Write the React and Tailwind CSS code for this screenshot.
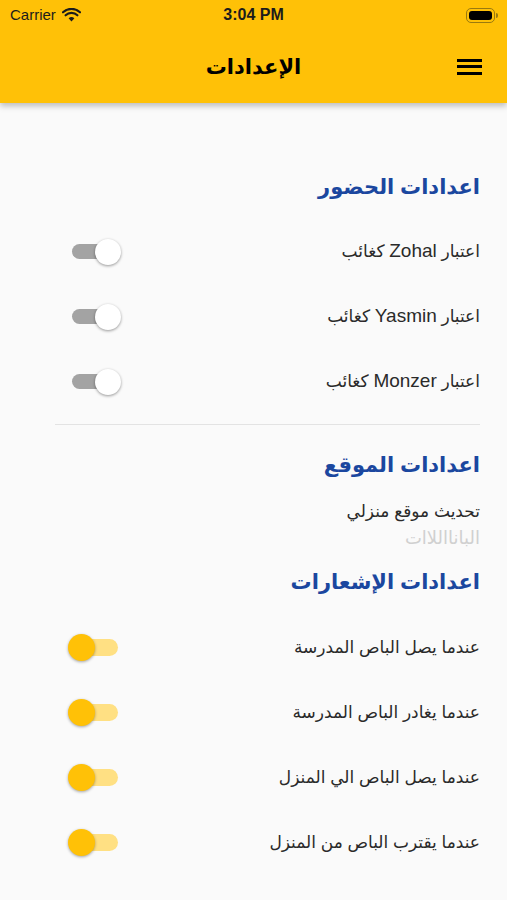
const font = { fontFamily: '"Liberation Sans", "DejaVu Sans", sans-serif' }

function Switch({ on }) {
  if (on) {
    return (
      <div className="relative w-[50px] h-[28px] flex items-center">
        <div className="absolute left-[10px] w-[40px] h-[17px] rounded-full bg-[#ffe083]" />
        <div className="absolute left-0 w-[27px] h-[27px] rounded-full bg-[#ffc107] shadow-[0_1px_3px_rgba(0,0,0,0.35)]" />
      </div>
    )
  }
  return (
    <div className="relative w-[50px] h-[28px] flex items-center">
      <div className="absolute left-0 w-[42px] h-[15px] rounded-full bg-[#a3a3a3]" />
      <div className="absolute left-[23px] w-[26px] h-[26px] rounded-full bg-white shadow-[0_1px_3px_rgba(0,0,0,0.4)]" />
    </div>
  )
}

function Row({ label, name, on }) {
  return (
    <div className="h-[65px] flex items-center justify-between">
      {name ? (
        <span className="text-[17px] text-[#2a2a2a]">
          اعتبار <span className="text-[19px]">{name}</span> كغائب
        </span>
      ) : (
        <span className="text-[17px] text-[#2a2a2a]">{label}</span>
      )}
      <div className={on ? 'ml-[41px]' : 'ml-[45px]'}>
        <Switch on={on} />
      </div>
    </div>
  )
}

function Heading({ children, className = '' }) {
  return (
    <div className={`flex items-center text-[21px] font-bold text-[#1b479f] ${className}`}>
      {children}
    </div>
  )
}

export default function App() {
  return (
    <div className="min-h-[900px] bg-[#fafafa]" style={font}>
      <div className="bg-[#ffc107] shadow-[0_3px_6px_rgba(0,0,0,0.25)] relative z-10">
        <div className="h-[30px] flex items-center justify-between px-[10px] text-[15px] text-[#1c1c1c] relative">
          <div className="flex items-center gap-[6px]">
            <span>Carrier</span>
            <svg width="19" height="14" viewBox="0 0 19 14">
              <path d="M9.5 13.5 L6.6 10.3 A4.2 4.2 0 0 1 12.4 10.3 Z" fill="#1c1c1c" />
              <path d="M3.6 7.3 A8.4 8.4 0 0 1 15.4 7.3" stroke="#1c1c1c" strokeWidth="2.2" fill="none" strokeLinecap="round" />
              <path d="M1 4.3 A12.3 12.3 0 0 1 18 4.3" stroke="#1c1c1c" strokeWidth="2.2" fill="none" strokeLinecap="round" />
            </svg>
          </div>
          <span className="absolute left-1/2 -translate-x-1/2 font-bold text-[16px]">3:04 PM</span>
          <div className="flex items-center mr-[-1px]">
            <div className="w-[29px] h-[15px] rounded-[5px] border border-[#9a7a10] p-[2px]">
              <div className="w-full h-full rounded-[3px] bg-black" />
            </div>
            <div className="w-[2px] h-[5px] rounded-r bg-[#9a7a10] ml-[1px]" />
          </div>
        </div>
        <div className="h-[73px] flex items-center justify-center relative">
          <span dir="rtl" className="text-[21px] font-bold text-black">الإعدادات</span>
          <div className="absolute right-[25px] flex flex-col gap-[3.5px]">
            <div className="w-[25px] h-[3px] bg-black" />
            <div className="w-[25px] h-[3px] bg-black" />
            <div className="w-[25px] h-[3px] bg-black" />
          </div>
        </div>
      </div>

      <div dir="rtl" className="pr-[27px] pl-[27px]">
        <div className="h-[51px]" />
        <Heading className="h-[65px]">اعدادات الحضور</Heading>
        <Row name="Zohal" />
        <Row name="Yasmin" />
        <Row name="Monzer" />

        <div className="mt-[10px] ml-[28px] h-px bg-[#e3e3e3]" />

        <Heading className="h-[40px] mt-[20px]">اعدادات الموقع</Heading>
        <div className="mt-[15px] h-[24px] flex items-center text-[17px] text-[#2a2a2a]">تحديث موقع منزلي</div>
        <div className="mt-[2px] h-[24px] flex items-center text-[18px] tracking-[3px] text-[#d0d0d0]">البانااللاات</div>

        <Heading className="h-[40px] mt-[12px]">اعدادات الإشعارات</Heading>
        <div className="h-[13px]" />
        <Row on label="عندما يصل الباص المدرسة" />
        <Row on label="عندما يغادر الباص المدرسة" />
        <Row on label="عندما يصل الباص الي المنزل" />
        <Row on label="عندما يقترب الباص من المنزل" />
      </div>
    </div>
  )
}
